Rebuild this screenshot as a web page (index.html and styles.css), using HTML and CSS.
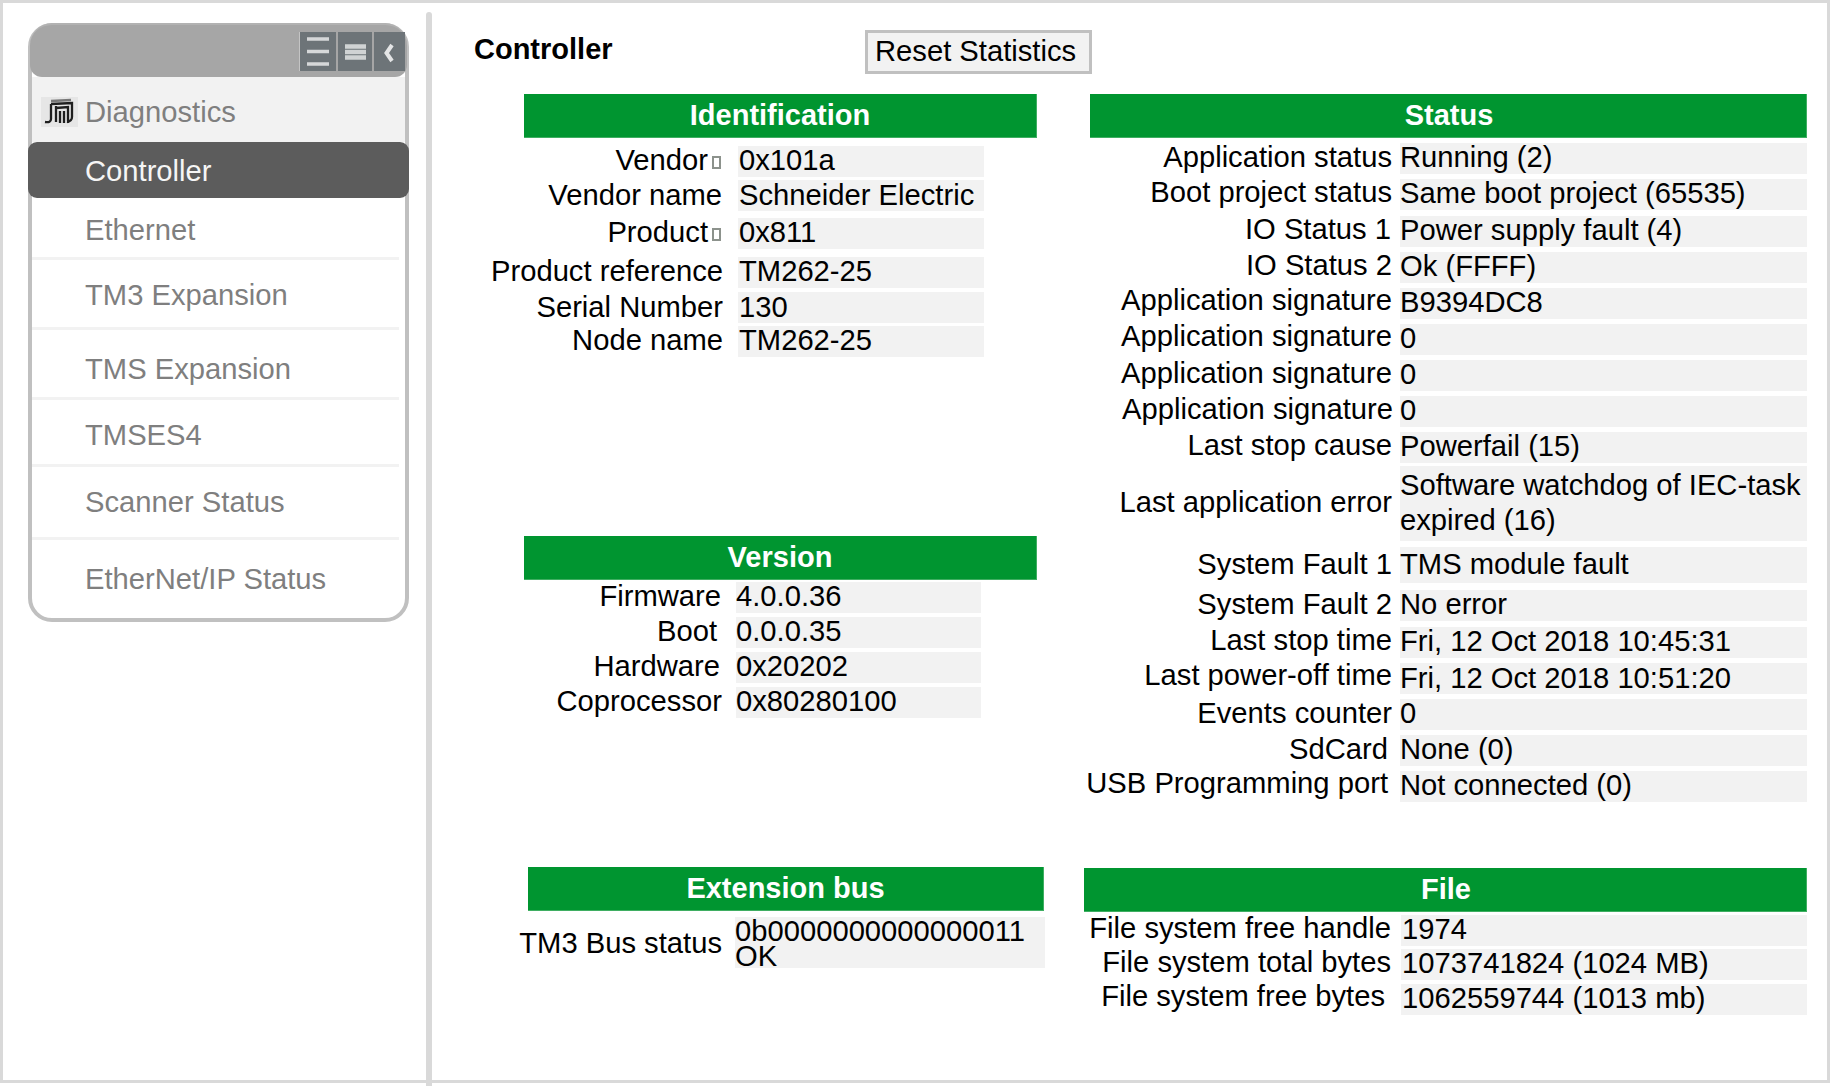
FILE: index.html
```html
<!DOCTYPE html>
<html lang="en">
<head>
<meta charset="utf-8">
<title>Controller</title>
<link rel="stylesheet" href="styles.css">
</head>
<body>
<div class="frame">
  <aside class="side">
    <div class="side-head">
      <span class="tool tool-a"><svg width="36" height="39" viewBox="0 0 36 39"><path d="M7 7H29M7 19.500H29M7 32H29" stroke="#d6d8d9" stroke-width="3.500"/></svg></span>
      <span class="tool tool-b"><svg width="34" height="39" viewBox="0 0 34 39"><path d="M7 14.500H28M7 20H28M7 25.500H28" stroke="#d0d3d4" stroke-width="4.500"/></svg></span>
      <span class="tool tool-c"><svg width="31" height="39" viewBox="0 0 31 39"><path d="M18 13L12.500 21L18 29" fill="none" stroke="#e4e5e6" stroke-width="4"/></svg></span>
    </div>
    <div class="side-group">
      <svg class="diag-icon" width="37" height="30" viewBox="0 0 37 30"><path d="M10 4L30 3" stroke="#777" stroke-width="2.500" fill="none"/><path d="M10 7L31 6V20Q31 24 26 25M10 7V22Q10 26 4 25M15 9V25M15 11L27 10V26M19 14V26M23 14V26" stroke="#1f1f1f" stroke-width="2.300" fill="none"/></svg>
      <span>Diagnostics</span>
    </div>
    <nav>
      <div class="nav-current">Controller</div>
      <div class="nav-item nav-ethernet">Ethernet</div>
      <div class="nav-item nav-tm3">TM3 Expansion</div>
      <div class="nav-item nav-tms">TMS Expansion</div>
      <div class="nav-item nav-tmses">TMSES4</div>
      <div class="nav-item nav-scanner">Scanner Status</div>
      <div class="nav-item nav-last">EtherNet/IP Status</div>
    </nav>
  </aside>
  <div class="divider"></div>
  <main class="main">
    <div class="title-row">
      <h1 class="title">Controller</h1>
      <button class="reset" type="button">Reset Statistics</button>
    </div>
    <div class="columns">
      <div class="col-left">
        <section class="identification">
          <h2 class="band">Identification</h2>
          <div class="kv kv-ident">
            <div class="lbl">Vendor<i class="mark"></i></div><div class="val">0x101a</div>
            <div class="lbl pad1 drop1">Vendor name</div><div class="val drop1">Schneider Electric</div>
            <div class="lbl">Product<i class="mark"></i></div><div class="val">0x811</div>
            <div class="lbl">Product reference</div><div class="val">TM262-25</div>
            <div class="lbl drop1">Serial Number</div><div class="val drop1">130</div>
            <div class="lbl">Node name</div><div class="val">TM262-25</div>
          </div>
        </section>
        <section class="version">
          <h2 class="band">Version</h2>
          <div class="kv kv-version">
            <div class="lbl pad1">Firmware</div><div class="val">4.0.0.36</div>
            <div class="lbl pad5">Boot</div><div class="val">0.0.0.35</div>
            <div class="lbl pad2">Hardware</div><div class="val">0x20202</div>
            <div class="lbl">Coprocessor</div><div class="val">0x80280100</div>
          </div>
        </section>
        <section class="extension">
          <h2 class="band">Extension bus</h2>
          <div class="kv kv-ext">
            <div class="lbl lbl-ext">TM3 Bus status</div>
            <div class="val-stack">
              <div class="val">0b0000000000000011</div>
              <div class="val val-tight">OK</div>
            </div>
          </div>
        </section>
      </div>
      <div class="col-right">
        <section class="status">
          <h2 class="band">Status</h2>
          <div class="kv kv-status">
            <div class="lbl">Application status</div><div class="val">Running (2)</div>
            <div class="lbl lift1">Boot project status</div><div class="val">Same boot project (65535)</div>
            <div class="lbl lift1 pad1">IO Status 1</div><div class="val">Power supply fault (4)</div>
            <div class="lbl lift1">IO Status 2</div><div class="val">Ok (FFFF)</div>
            <div class="lbl lift2">Application signature</div><div class="val">B9394DC8</div>
            <div class="lbl lift2">Application signature</div><div class="val">0</div>
            <div class="lbl lift1">Application signature</div><div class="val">0</div>
            <div class="lbl lift1 out1">Application signature</div><div class="val">0</div>
            <div class="lbl lift1">Last stop cause</div><div class="val">Powerfail (15)</div>
            <div class="lbl lbl-error">Last application error</div><div class="val val-wrap">Software watchdog of IEC-task expired (16)</div>
            <div class="lbl drop3">System Fault 1</div><div class="val val-fault">TMS module fault</div>
            <div class="lbl">System Fault 2</div><div class="val">No error</div>
            <div class="lbl lift1">Last stop time</div><div class="val">Fri, 12 Oct 2018 10:45:31</div>
            <div class="lbl lift2">Last power-off time</div><div class="val drop1">Fri, 12 Oct 2018 10:51:20</div>
            <div class="lbl">Events counter</div><div class="val">0</div>
            <div class="lbl pad4">SdCard</div><div class="val">None (0)</div>
            <div class="lbl lift2 pad4">USB Programming port</div><div class="val">Not connected (0)</div>
          </div>
        </section>
        <section class="file">
          <h2 class="band">File</h2>
          <div class="kv kv-file">
            <div class="lbl lift1 out1">File system free handle</div><div class="val">1974</div>
            <div class="lbl lift1 out1">File system total bytes</div><div class="val">1073741824 (1024 MB)</div>
            <div class="lbl lift2 pad5">File system free bytes</div><div class="val">1062559744 (1013 mb)</div>
          </div>
        </section>
      </div>
    </div>
  </main>
</div>
</body>
</html>
```

FILE: styles.css
```css
* { box-sizing: border-box; }
html, body { margin: 0; padding: 0; background: #fff; }
body { font-family: "Liberation Sans", Arial, sans-serif; font-size: 29.200px; color: #000; height: 1088px; overflow: hidden; }

.frame { display: flex; align-items: flex-start; height: 1083px; border: 3px solid #d9d9d9; background: #fff; }

/* side menu */
.side { width: 381px; height: 599px; margin: 20px 0 0 25px; border: 4px solid #c0c0c0; border-radius: 24px; flex: none; color: #7f7f7f; }
.side-head { display: flex; justify-content: flex-end; gap: 2px; height: 54px; margin: -4px -2px 0; padding: 7px 2px 6px 0; background: #a6a6a6; border-radius: 22px 22px 12px 12px; border-top: 2px solid #b2b2b2; }
.tool { display: block; height: 39px; background: #6d7478; border-left: 1px solid #c4c4c4; }
.tool svg { display: block; }
.tool-a { width: 37px; }
.tool-b { width: 34px; border-left: 0; }
.tool-c { width: 31px; border-left: 0; }
.side-group { display: flex; align-items: center; gap: 7px; height: 65px; padding: 5px 0 0 9px; background: #f2f2f2; line-height: 36px; }
.diag-icon { display: block; background: #e6e6e6; flex: none; }
.nav-current { height: 56px; margin: 0 -4px; padding: 11px 0 0 57px; line-height: 36px; background: #5c5c5c; color: #f5f5f5; border-radius: 9px; }
.nav-item { margin-right: 6px; padding-left: 53px; line-height: 36px; border-bottom: 3px solid #f2f2f2; }
.nav-ethernet { height: 62px; padding-top: 14px; }
.nav-tm3 { height: 70px; padding-top: 17px; }
.nav-tms { height: 70px; padding-top: 21px; }
.nav-tmses { height: 67px; padding-top: 17px; }
.nav-scanner { height: 73px; padding-top: 17px; }
.nav-last { height: 70px; padding-top: 21px; border-bottom: 0; }

.divider { flex: none; width: 6px; height: 1074px; margin: 9px 0 -3px 17px; background: #d9d9d9; border-radius: 3px 3px 0 0; }

/* main */
.main { flex: 1; margin-left: 43px; padding-top: 27px; }
.title-row { display: flex; align-items: flex-start; height: 44px; }
.title { width: 390px; margin: 2px 0 0 -1px; font-size: 29px; font-weight: 700; line-height: 34px; }
.reset { width: 227px; height: 44px; margin-left: 1px; padding: 0 0 2px 7px; border: 3px solid #c0c0c0; background: #f2f2f2; font: 29.200px/34px "Liberation Sans", Arial, sans-serif; color: #000; text-align: left; border-radius: 0; }
.columns { display: flex; margin-top: 20px; }
.col-left { width: 609px; flex: none; }
.col-right { width: 723px; flex: none; }

.band { height: 44px; margin: 0; background: #009530; border-right: 1px solid #3fae62; border-bottom: 1px solid #3fae62; color: #fff; font-size: 29px; font-weight: 700; line-height: 42px; text-align: center; }

.kv { display: grid; }
.lbl { line-height: 28px; text-align: right; white-space: nowrap; }
.val { height: 30.500px; background: #f2f2f2; line-height: 28px; }

.pad1 { padding-right: 1px; }
.pad2 { padding-right: 2px; }
.pad4 { padding-right: 4px; }
.pad5 { padding-right: 5px; }
.lift1 { margin-top: -1px; }
.lift2 { margin-top: -2px; }
.drop1 { padding-top: 1px; }
.drop3 { margin-top: 3px; }
.out1 { margin-right: -1px; }
.mark { display: inline-block; width: 9px; height: 13px; margin: 0 2px 0 4px; border: 2px solid #8c928c; background: #fff; vertical-align: 1px; }

.identification .band { width: 513px; margin-left: 49px; }
.kv-ident { grid-template-columns: 248px 246px; column-gap: 15px; grid-template-rows: 34px 38px 39px 35px 34px 31px; margin-top: 8px; }
.kv-ident .val { padding-left: 1px; }

.version { margin-top: 179px; }
.version .band { width: 513px; margin-left: 49px; }
.kv-version { grid-template-columns: 247px 245px; column-gap: 14px; grid-template-rows: 35px 35px 35px 31px; margin-top: 2px; }

.extension { margin-top: 149px; }
.extension .band { width: 516px; margin-left: 53px; }
.kv-ext { grid-template-columns: 247px 310px; column-gap: 13px; margin-top: 6px; }
.lbl-ext { margin-top: 12px; }
.val-stack { display: flex; flex-direction: column; }
.val-tight { height: 20.500px; line-height: 16px; }

.status .band { width: 717px; margin-left: 6px; padding-left: 2px; }
.kv-status { grid-template-columns: 308px 407px; column-gap: 8px; grid-template-rows: 36px 37px 36px 36px 36px 36px 36px 36px 34px 81px 43px 37px 36px 36px 36px 36px 31px; margin-top: 5px; }
.lbl-error { margin-top: 22px; }
.val-wrap { height: 75px; padding-top: 2px; line-height: 35px; }
.val-fault { height: 36px; padding-top: 3px; }

.file { margin-top: 66px; }
.file .band { padding-left: 2px; }
.kv-file { grid-template-columns: 306px 406px; column-gap: 11px; grid-template-rows: 34px 35px 31px; margin-top: 3px; }
.kv-file .val { padding-left: 1px; }
```
